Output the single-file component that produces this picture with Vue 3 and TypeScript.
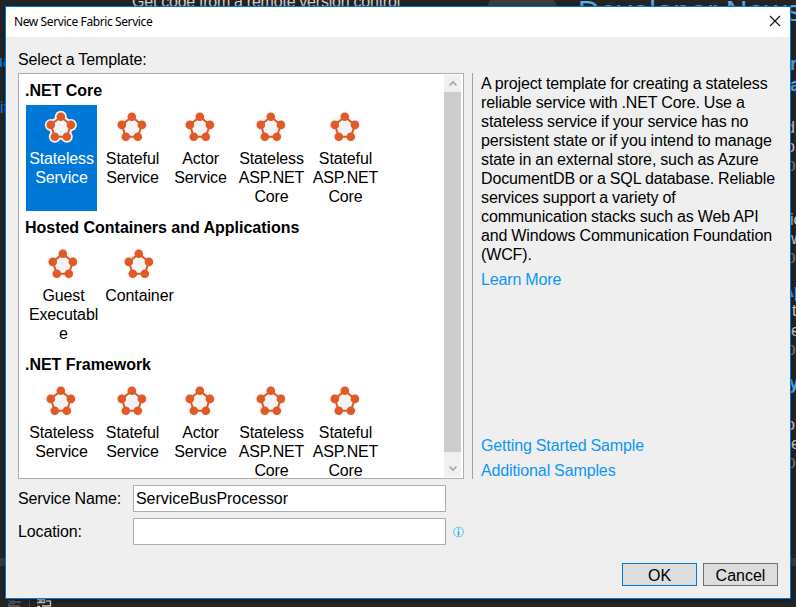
<script setup lang="ts">
import { ref } from 'vue'

interface Template { name: string; width: number }
interface Group { title: string; items: Template[] }

const services: Template[] = [
  { name: 'Stateless Service', width: 71 },
  { name: 'Stateful Service', width: 71 },
  { name: 'Actor Service', width: 65 },
  { name: 'Stateless ASP.NET Core', width: 77 },
  { name: 'Stateful ASP.NET Core', width: 71 },
]
const groups: Group[] = [
  { title: '.NET Core', items: services },
  {
    title: 'Hosted Containers and Applications',
    items: [
      { name: 'Guest Executable', width: 75 },
      { name: 'Container', width: 77 },
    ],
  },
  { title: '.NET Framework', items: services },
]
const selected = ref('0-0')
const serviceName = ref('ServiceBusProcessor')
const location = ref('')
const nodes: [number, number][] = [[17.8, 7.7], [27.9, 15.9], [23.8, 27.8], [11.8, 27.8], [7.8, 15.9]]
const ring = nodes.map((n) => n.join(',')).join(' ')

const behind = [
  { text: 'n', kind: 'head', x: 790, y: 55 },
  { text: 'a', kind: 'head', x: 790, y: 76 },
  { text: 'd', kind: 'body', x: 786, y: 118 },
  { text: 'o', kind: 'body', x: 786, y: 137 },
  { text: '0', kind: 'date', x: 787, y: 156 },
  { text: 'ic', kind: 'body', x: 790, y: 210 },
  { text: 'w', kind: 'body', x: 791, y: 229 },
  { text: '0', kind: 'date', x: 787, y: 248 },
  { text: 'Ap', kind: 'head', x: 781, y: 282 },
  { text: 't', kind: 'body', x: 792, y: 301 },
  { text: 'e', kind: 'body', x: 791, y: 321 },
  { text: '0', kind: 'date', x: 787, y: 340 },
  { text: 'y', kind: 'head', x: 789, y: 374 },
  { text: 'o', kind: 'body', x: 786, y: 415 },
  { text: 'e', kind: 'body', x: 791, y: 434 },
  { text: '0', kind: 'date', x: 787, y: 453 },
]
</script>

<template>
  <div class="desktop">
    <div class="backdrop" aria-hidden="true">
      <div class="circle"></div>
      <div class="band"></div>
      <span class="under remote">Get code from a remote version control</span>
      <span class="under news">Developer News</span>
      <span class="under link-a">ua</span>
      <span class="under link-b">it</span>
      <span v-for="(b, i) in behind" :key="i" class="under" :class="b.kind" :style="{ left: b.x + 'px', top: b.y + 'px' }">{{ b.text }}</span>
      <svg class="tools" width="60" height="8" viewBox="0 0 60 8">
        <path d="M2 1l6 4M8 1L2 6M7 3h8M2 7h12" stroke="#55555a" stroke-width="2" fill="none" />
        <path d="M23.500 0v8" stroke="#46464a" />
        <path d="M31 .5h3v3h-3M35.500.5h3v3h-3zM40 2h4.500v5H38M31 7.500h3M36 7h4" stroke="#c5c5c5" stroke-width="1.400" fill="none" />
      </svg>
    </div>

    <section class="dialog">
      <header>
        <span class="title">New Service Fabric Service</span>
        <svg width="12" height="12" viewBox="0 0 12 12"><path d="M1 1l10 10M11 1L1 11" stroke="#111" stroke-width="1.100" fill="none" /></svg>
      </header>
      <main>
        <div class="prompt">Select a Template:</div>
        <div class="content">
          <div class="list">
            <div class="groups">
              <div v-for="(g, gi) in groups" :key="g.title" class="group">
                <h2>{{ g.title }}</h2>
                <div class="row">
                  <div
                    v-for="(t, ti) in g.items"
                    :key="t.name"
                    class="item"
                    :class="{ selected: selected === gi + '-' + ti }"
                    :style="{ width: t.width + 'px' }"
                    @click="selected = gi + '-' + ti"
                  >
                    <svg width="37" height="36" viewBox="0 0 37 36">
                      <g class="halo">
                        <polygon :points="ring" stroke-width="6" />
                        <circle v-for="(n, i) in nodes" :key="i" :cx="n[0]" :cy="n[1]" r="6" />
                      </g>
                      <polygon :points="ring" fill="#f4f4f4" stroke="#df5a26" stroke-width="2" />
                      <circle v-for="(n, i) in nodes" :key="i" :cx="n[0]" :cy="n[1]" r="4.300" fill="#df5a26" />
                    </svg>
                    <span>{{ t.name }}</span>
                  </div>
                </div>
              </div>
            </div>
            <div class="scrollbar">
              <svg width="17" height="17" viewBox="0 0 17 17"><path d="M5.500 10.500L9 7l3.500 3.500" stroke="#a3a3a3" stroke-width="1.600" fill="none" /></svg>
              <div class="thumb"></div>
              <svg width="17" height="17" viewBox="0 0 17 17"><path d="M5.500 6.500L9 10l3.500-3.500" stroke="#a3a3a3" stroke-width="1.600" fill="none" /></svg>
            </div>
          </div>
          <aside>
            <p>A project template for creating a stateless reliable service with .NET Core. Use a stateless service if your service has no persistent state or if you intend to manage state in an external store, such as Azure DocumentDB or a SQL database. Reliable services support a variety of communication stacks such as Web API and Windows Communication Foundation (WCF).</p>
            <a>Learn More</a>
            <a class="samples">Getting Started Sample</a>
            <a>Additional Samples</a>
          </aside>
        </div>
        <div class="form">
          <label for="name">Service Name:</label>
          <input id="name" v-model="serviceName" type="text" />
          <span></span>
          <label for="loc">Location:</label>
          <input id="loc" v-model="location" type="text" />
          <svg width="12" height="12" viewBox="0 0 12 12">
            <circle cx="5.500" cy="6" r="4.900" fill="#e2f1f8" stroke="#6fbde2" />
            <path d="M5.500 2.500v1.300M5.500 5v4.500" stroke="#2b9fd4" stroke-width="1.500" />
          </svg>
        </div>
        <footer>
          <button class="ok">OK</button>
          <button>Cancel</button>
        </footer>
      </main>
    </section>
  </div>
</template>

<style>
body { margin: 0; overflow: hidden; }
</style>

<style scoped>
.desktop {
  box-sizing: border-box;
  position: relative;
  width: 796px;
  height: 607px;
  padding: 6px 5px 8px;
  overflow: hidden;
  background: #252526;
  color: #000;
  font: 16px/19px "Liberation Sans", Arial, sans-serif;
  letter-spacing: -.12px;
  word-spacing: -.3px;
}
.backdrop { position: absolute; inset: 0; }
.circle { position: absolute; left: 484px; top: -17px; width: 76px; height: 76px; border-radius: 50%; background: #3f3f41; }
.band { position: absolute; left: 0; top: 558px; width: 100%; height: 8px; background: #3b3b42; }
.under { position: absolute; white-space: nowrap; }
.remote { left: 132px; top: -8px; color: #d0d0d0; letter-spacing: -.2px; }
.news { left: 578px; top: -5px; color: #62aee4; font-size: 30px; line-height: 32px; letter-spacing: .3px; }
.link-a { left: -6px; top: 52px; color: #1683d8; }
.link-b { left: 0; top: 98px; color: #1683d8; }
.head { color: #62aee4; font-weight: bold; font-size: 18px; }
.body { color: #d0d0d0; }
.date { color: #858589; font-size: 15px; }
.tools { position: absolute; left: 6px; top: 599px; }
.dialog {
  box-sizing: border-box;
  position: relative;
  display: flex;
  flex-direction: column;
  width: 786px;
  height: 593px;
  border: 1px solid #0078d7;
  background: #efefef;
  box-shadow: 0 1px 5px rgba(0, 0, 0, .5);
}
header { display: flex; justify-content: space-between; align-items: center; box-sizing: border-box; height: 30px; padding: 0 9px 0 8px; background: #fff; }
header svg { margin-bottom: 2px; }
.title { font: 12px/30px "Noto Sans", "Open Sans", sans-serif; letter-spacing: -.4px; word-spacing: 0; }
main { flex: 1; padding: 13px 12px; display: flex; flex-direction: column; padding-bottom: 12px; }
.prompt { height: 23px; flex: none; }
.content { display: flex; flex: none; height: 406px; }
.list { box-sizing: border-box; display: flex; flex: none; width: 446px; height: 406px; border: 1px solid #abadb3; background: #fff; padding: 1px; }
.groups { flex: 1; overflow: hidden; padding: 6px 0 0 6px; }
.group { height: 137px; }
h2 { margin: 0 0 0 -1px; height: 24px; font-size: 16px; line-height: 19px; font-weight: bold; letter-spacing: -.02px; word-spacing: 0; }
.row { display: flex; }
.item { box-sizing: border-box; flex: none; height: 106px; padding: 4px 1px 0; text-align: center; overflow-wrap: anywhere; }
.item svg { display: block; margin: 0 auto 4px; }
.item span { display: block; }
.halo { fill: #f4f4f4; stroke: #f4f4f4; stroke-width: 0; stroke-linejoin: round; }
.item:not(.selected) .halo { opacity: .8; }
.selected { background: #0078d7; color: #fff; }
.scrollbar { display: flex; flex: none; flex-direction: column; width: 17px; margin-right: 1px; background: #f0f0f0; }
.scrollbar svg { flex: none; }
.thumb { height: 360px; margin-bottom: 8px; background: #cdcdcd; }
aside { display: flex; flex: 1; flex-direction: column; box-sizing: border-box; min-width: 0; margin-left: 8px; padding: 1px 0 0 8px; border-left: 1px solid #a0a0a0; }
p { margin: 0 -6px 6px 0; }
a { color: #0e97fa; line-height: 19px; }
.samples { margin: 147px 0 6px; }
.form { display: grid; grid-template-columns: 115px 313px 12px; row-gap: 6px; align-items: center; margin-top: 6px; }
.form svg { margin-left: 7px; }
input { box-sizing: border-box; width: 313px; height: 27px; padding: 1px 2px 0; border: 1px solid #abadb3; background: #fff; color: #000; font: inherit; letter-spacing: -.05px; outline: none; }
footer { display: flex; justify-content: flex-end; gap: 6px; margin-top: auto; }
button { box-sizing: border-box; width: 75px; height: 23px; padding: 1px 0 0; border: 1px solid #707070; background: #ddd; color: #000; font: inherit; line-height: 19px; }
.ok { border-color: #0078d7; }
</style>
